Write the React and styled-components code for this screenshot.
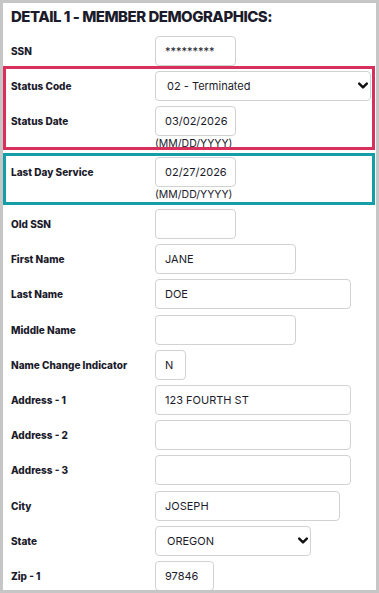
import React from "react";
import styled, { createGlobalStyle } from "styled-components";

const Global = createGlobalStyle`
  html, body { margin: 0; padding: 0; background: #fff; }
  * { box-sizing: border-box; }
`;

const Frame = styled.div`
  height: 593px;
  border: 3px solid #c6c6c6;
  overflow: hidden;
  background: #fff;
  font-family: Inter, "Liberation Sans", sans-serif;
  color: #1b1b2b;
`;

const Title = styled.h2`
  margin: 0;
  padding: 4px 0 0 8px;
  height: 33px;
  font-size: 15px;
  font-weight: 800;
  letter-spacing: -0.5px;
  line-height: 20px;
`;

const Row = styled.div`
  display: grid;
  grid-template-columns: 144px auto;
  align-items: center;
  padding-left: ${(p) => (p.$inBox ? 5 : 8)}px;
  margin-top: ${(p) => p.$mt || 0}px;
`;

const Label = styled.label`
  grid-column: 1;
  grid-row: 1;
  font-size: 10px;
  font-weight: 800;
`;

const Field = styled.input`
  grid-column: 2;
  grid-row: 1;
  width: ${(p) => p.$w}px;
  height: 30px;
  border: 1px solid #d2d2d2;
  border-radius: 4px;
  padding: 0 0 0 9px;
  font-family: Inter, "Liberation Sans", sans-serif;
  font-size: 11px;
  color: #1b1b2b;
  background: #fff;
  outline: none;
`;

const SelectWrap = styled.div`
  grid-column: 2;
  grid-row: 1;
  position: relative;
  width: ${(p) => p.$w}px;
  height: 30px;
`;

const Select = styled.select`
  appearance: none;
  width: 100%;
  height: 30px;
  border: 1px solid #d2d2d2;
  border-radius: 4px;
  padding: 0 0 0 11px;
  font-family: Inter, "Liberation Sans", sans-serif;
  font-size: 11px;
  color: #1b1b2b;
  background: #fff;
  outline: none;
`;

const Chevron = styled.svg`
  position: absolute;
  right: 3px;
  top: 11px;
  width: 10px;
  height: 8px;
  pointer-events: none;
`;

const Hint = styled.div`
  grid-column: 2;
  grid-row: 2;
  font-size: 10.5px;
  line-height: 15px;
  color: #1b1b2b;
`;

const Box = styled.div`
  border: 3px solid ${(p) => p.$color};
  margin-right: 1px;
  overflow: hidden;
  height: ${(p) => p.$h}px;
  padding-top: ${(p) => p.$pt}px;
  margin-top: ${(p) => p.$mt}px;
`;

const List = styled.div`
  display: flex;
  flex-direction: column;
  gap: 5.2px;
  margin-top: 4px;
`;

function Dropdown({ w, value }) {
  return (
    <SelectWrap $w={w}>
      <Select defaultValue={value}>
        <option>{value}</option>
      </Select>
      <Chevron viewBox="0 0 10 8">
        <path d="M1.2 1.6 L5 5.4 L8.8 1.6" fill="none" stroke="#111" strokeWidth="2.4" strokeLinecap="round" strokeLinejoin="round" />
      </Chevron>
    </SelectWrap>
  );
}

const rows = [
  { label: "Old SSN", w: 81, v: "" },
  { label: "First Name", w: 141, v: "JANE" },
  { label: "Last Name", w: 196, v: "DOE" },
  { label: "Middle Name", w: 141, v: "" },
  { label: "Name Change Indicator", w: 31, v: "N" },
  { label: "Address - 1", w: 196, v: "123 FOURTH ST" },
  { label: "Address - 2", w: 196, v: "" },
  { label: "Address - 3", w: 196, v: "" },
  { label: "City", w: 185, v: "JOSEPH" },
  { label: "State", w: 156, select: true, v: "OREGON" },
  { label: "Zip - 1", w: 59, v: "97846" },
];

export default function App() {
  return (
    <>
      <Global />
      <Frame>
        <Title>DETAIL 1 - MEMBER DEMOGRAPHICS:</Title>
        <Row>
          <Label>SSN</Label>
          <Field $w={81} defaultValue="*********" />
        </Row>
        <Box $color="#d7305c" $h={84} $pt={2} $mt={0}>
          <Row $inBox>
            <Label>Status Code</Label>
            <Dropdown w={216} value="02 - Terminated" />
          </Row>
          <Row $inBox $mt={5}>
            <Label>Status Date</Label>
            <Field $w={81} defaultValue="03/02/2026" />
            <Hint>(MM/DD/YYYY)</Hint>
          </Row>
        </Box>
        <Box $color="#159ea8" $h={52} $pt={1} $mt={3}>
          <Row $inBox>
            <Label>Last Day Service</Label>
            <Field $w={81} defaultValue="02/27/2026" />
            <Hint>(MM/DD/YYYY)</Hint>
          </Row>
        </Box>
        <List>
          {rows.map((r) => (
            <Row key={r.label}>
              <Label>{r.label}</Label>
              {r.select ? (
                <Dropdown w={r.w} value={r.v} />
              ) : (
                <Field $w={r.w} defaultValue={r.v} />
              )}
            </Row>
          ))}
        </List>
      </Frame>
    </>
  );
}
